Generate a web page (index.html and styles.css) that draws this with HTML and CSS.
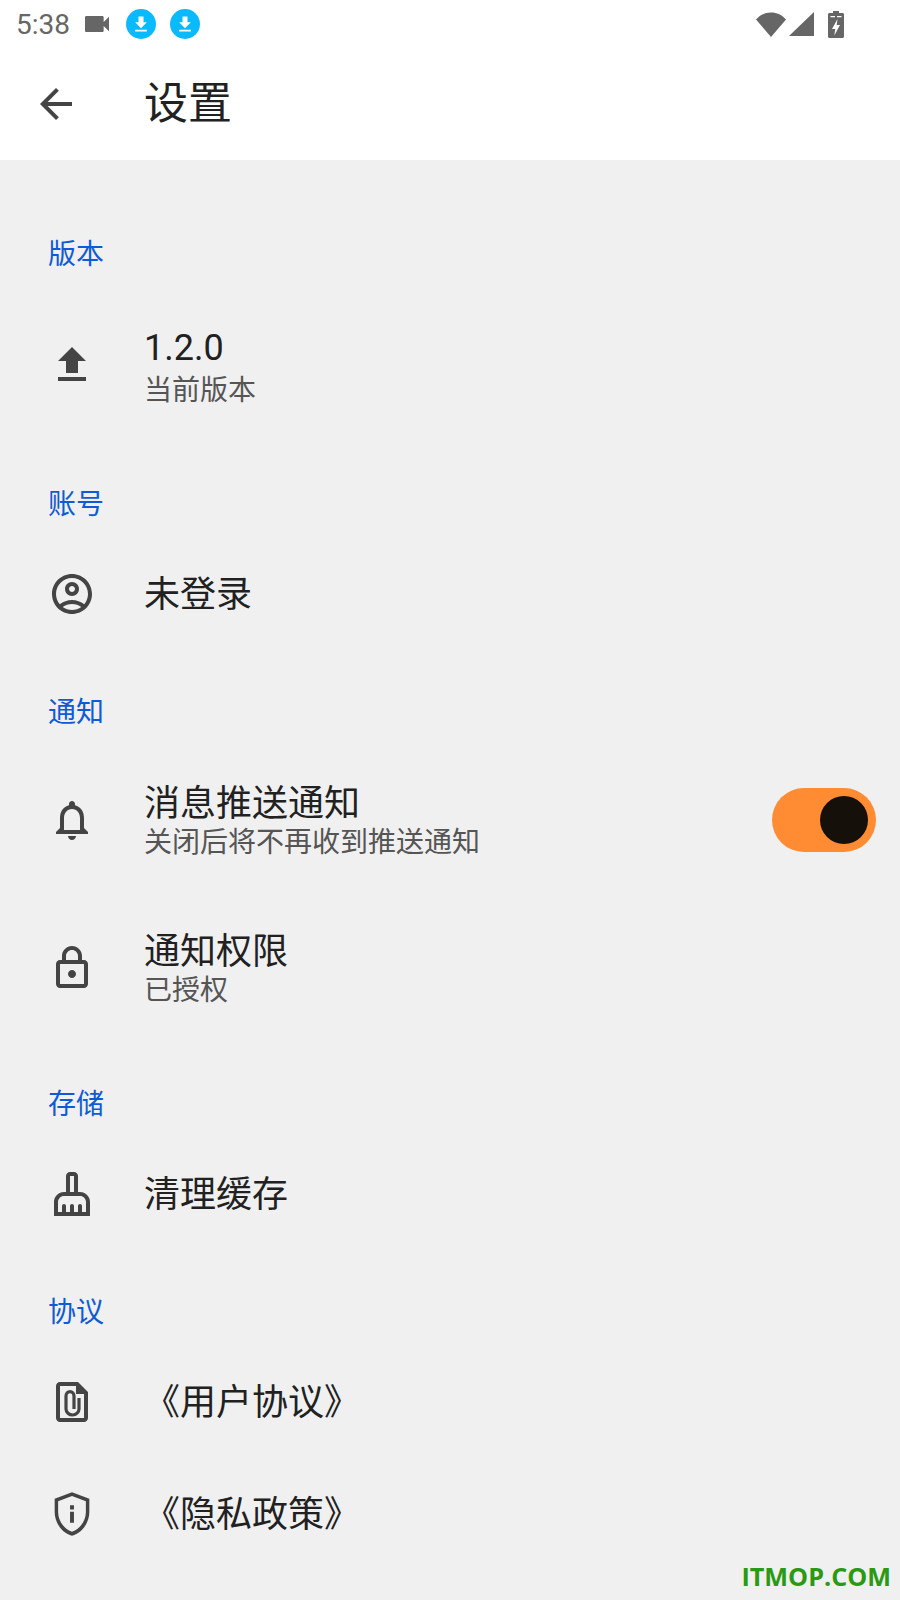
FILE: index.html
```
<!DOCTYPE html>
<html lang="zh-CN">
<head><meta charset="utf-8"><title>设置</title>
<link rel="stylesheet" href="styles.css">
</head>
<body>
<div class="top">
 <div class="status">
  <span class="time">5:38</span>
  <svg class="cam" viewBox="0 0 24 24"><path d="M17 10.5V7c0-.55-.45-1-1-1H4c-.55 0-1 .45-1 1v10c0 .55.45 1 1 1h12c.55 0 1-.45 1-1v-3.5l4 4v-11l-4 4z"/></svg>
  <span class="dl"><svg viewBox="0 0 24 24"><path d="M15 3H9v7H5l7 7 7-7h-4zM5 19v2h14v-2z"/></svg></span>
  <span class="dl"><svg viewBox="0 0 24 24"><path d="M15 3H9v7H5l7 7 7-7h-4zM5 19v2h14v-2z"/></svg></span>
  <span class="fill"></span>
  <svg class="sys wifi" viewBox="0 0 30 25"><path d="M0 7.500C4 3 9 .500 15 .500S26 3 30 7.500L15 25z"/></svg>
  <svg class="sys signal" viewBox="0 0 25 24"><path d="M25 0v24H0z"/></svg>
  <svg class="sys batt" viewBox="0 0 16 27"><path d="M5 0h6v2h3.500c.8 0 1.500.7 1.500 1.500v22c0 .8-.7 1.500-1.500 1.500h-13C.7 27 0 26.300 0 25.500v-22C0 2.700.7 2 1.500 2H5z"/><path class="bolt" d="M2.500 5h4.500v1.300H2.500zM9 5h4.500v1.300H9zM9.500 8L4 18h3.300l-1 6.500L12 14H8.700z"/></svg>
 </div>
 <div class="bar">
  <svg class="ico back" viewBox="0 0 24 24"><path d="M20 11H7.830l5.590-5.590L12 4l-8 8 8 8 1.410-1.410L7.830 13H20v-2z"/></svg>
  <h1>设置</h1>
 </div>
</div>

<div class="list">
 <div class="lab">版本</div>
 <div class="row two ver">
  <svg class="ico" viewBox="0 0 24 24"><path d="M9 16h6v-6h4l-7-7-7 7h4zm-4 2h14v2H5z"/></svg>
  <div class="txt"><div class="t">1.2.0</div><div class="s">当前版本</div></div>
 </div>

 <div class="lab">账号</div>
 <div class="row">
  <svg class="ico" viewBox="0 0 24 24"><path d="M12 2C6.480 2 2 6.480 2 12s4.480 10 10 10 10-4.480 10-10S17.520 2 12 2zM7.350 18.500C8.660 17.560 10.260 17 12 17s3.340.56 4.650 1.500c-1.310.94-2.910 1.500-4.650 1.500s-3.340-.56-4.650-1.500zm10.790-1.380C16.450 15.800 14.320 15 12 15s-4.450.8-6.140 2.120C4.700 15.730 4 13.950 4 12c0-4.420 3.580-8 8-8s8 3.580 8 8c0 1.950-.7 3.730-1.860 5.120zM12 6c-1.930 0-3.500 1.570-3.500 3.500S10.070 13 12 13s3.500-1.570 3.500-3.500S13.930 6 12 6zm0 5c-.83 0-1.500-.67-1.500-1.500S11.170 8 12 8s1.500.67 1.500 1.500S12.830 11 12 11z"/></svg>
  <div class="txt"><div class="t">未登录</div></div>
 </div>

 <div class="lab">通知</div>
 <div class="row two">
  <svg class="ico" viewBox="0 0 24 24"><path d="M12 22c1.100 0 2-.9 2-2h-4c0 1.100.9 2 2 2zm6-6v-5c0-3.070-1.630-5.640-4.500-6.320V4c0-.83-.67-1.500-1.500-1.500s-1.500.67-1.500 1.500v.68C7.640 5.360 6 7.920 6 11v5l-2 2v1h16v-1l-2-2zm-2 1H8v-6c0-2.480 1.510-4.500 4-4.500s4 2.020 4 4.500v6z"/></svg>
  <div class="txt"><div class="t">消息推送通知</div><div class="s">关闭后将不再收到推送通知</div></div>
  <div class="sw"><div class="knob"></div></div>
 </div>
 <div class="row two">
  <svg class="ico" viewBox="0 0 24 24"><path d="M18 8h-1V6c0-2.760-2.240-5-5-5S7 3.240 7 6v2H6c-1.100 0-2 .9-2 2v10c0 1.100.9 2 2 2h12c1.100 0 2-.9 2-2V10c0-1.100-.9-2-2-2zM9 6c0-1.660 1.340-3 3-3s3 1.340 3 3v2H9V6zm9 14H6V10h12v10zm-6-3c1.100 0 2-.9 2-2s-.9-2-2-2-2 .9-2 2 .9 2 2 2z"/></svg>
  <div class="txt"><div class="t">通知权限</div><div class="s">已授权</div></div>
 </div>

 <div class="lab">存储</div>
 <div class="row">
  <svg class="ico" viewBox="0 0 24 24"><path d="M16 11h-1V3c0-1.100-.9-2-2-2h-2C9.900 1 9 1.900 9 3v8H8c-2.760 0-5 2.240-5 5v7h18v-7c0-2.760-2.240-5-5-5zM11 3h2v8h-2V3zm8 18h-2v-3c0-.55-.45-1-1-1s-1 .45-1 1v3h-2v-3c0-.55-.45-1-1-1s-1 .45-1 1v3H9v-3c0-.55-.45-1-1-1s-1 .45-1 1v3H5v-5c0-1.650 1.350-3 3-3h8c1.650 0 3 1.350 3 3v5z"/></svg>
  <div class="txt"><div class="t">清理缓存</div></div>
 </div>

 <div class="lab">协议</div>
 <div class="row">
  <svg class="ico" viewBox="0 0 24 24"><path d="M6 2h9l5 5v13c0 1.100-.9 2-2 2H6c-1.100 0-2-.9-2-2V4c0-1.100.9-2 2-2zm0 2v16h12V8h-4V4z"/><path class="clip" d="M15.500 10v5.500c0 1.600-1.400 3-3.200 3s-3.300-1.400-3.300-3V9c0-1.200.9-2.200 2-2.200s2 1 2 2.200v6.500"/></svg>
  <div class="txt"><div class="t">《用户协议》</div></div>
 </div>
 <div class="row">
  <svg class="ico big" viewBox="0 0 24 24"><path fill-rule="evenodd" d="M12 2L4 5v6.090c0 5.050 3.410 9.760 8 10.910 4.590-1.150 8-5.860 8-10.910V5l-8-3zm6.400 9.090c0 4.100-2.700 7.800-6.400 9.100-3.700-1.300-6.400-5-6.400-9.100v-5l6.400-2.400 6.400 2.400v5zM11.100 8h1.800v1.900h-1.800zm0 3h1.800v5h-1.800z"/></svg>
  <div class="txt"><div class="t">《隐私政策》</div></div>
 </div>
</div>
<div class="mark">ITMOP.COM</div>
</body>
</html>
```

FILE: styles.css
```
html{font-family:Roboto,"Noto Sans CJK SC",sans-serif}
body{margin:0;padding:0;width:900px;height:1600px;overflow:hidden;background:#f0f0f0;position:relative}
svg{display:block;flex:none}

.top{background:#fff;height:160px}
.status{display:flex;align-items:center;height:48px;color:#666;fill:#666}
.time{font-size:28px;margin-left:16px;width:65px}
.cam{width:32px;height:32px}
.dl{width:30px;height:30px;border-radius:50%;background:#0abaff;fill:#fff;display:flex;align-items:center;justify-content:center;margin-left:14px}
.cam+.dl{margin-left:13px}
.dl svg{width:20px;height:20px}
.fill{flex:1}
.sys{margin-left:3px}
.wifi{width:30px;height:25px}
.signal{width:25px;height:24px}
.batt{width:16px;height:27px;margin-left:14px;margin-right:56px}
.bolt{fill:#fff}

.bar{display:flex;align-items:center;height:112px;padding-left:32px}
.back{fill:#111}
h1{margin:0 0 0 64px;padding-bottom:8px;font-size:44px;font-weight:400;color:#212121}

.list{padding-top:32px}
.lab{padding:49px 0 19px 48px;font-size:28px;line-height:28px;color:#0d5bd6}
.row{display:flex;align-items:center;height:112px;padding-left:48px}
.row.two{height:148px}
.row.ver{height:154px}
.ico{width:48px;height:48px;fill:#444}
.ico.big{width:52px;height:52px;margin:0 -2px}
.clip{fill:none;stroke:#444;stroke-width:1.600}
.txt{flex:1;margin-left:48px;padding-top:2px}
.two .txt{padding-top:6px}
.two.ver .txt{padding-top:4px}
.t{font-size:36px;line-height:40px;color:#212121}
.ver .t{line-height:47px}
.s{font-size:28px;line-height:38px;color:#555}

.sw{width:104px;height:64px;border-radius:32px;background:#ff8c33;margin-right:24px;display:flex;align-items:center;justify-content:flex-end;padding-right:8px;box-sizing:border-box}
.knob{width:48px;height:48px;border-radius:50%;background:#15100a}

.mark{position:absolute;right:9px;bottom:8px;font:700 25.200px/32px "Open Sans",sans-serif;color:#2a9a12}
```
